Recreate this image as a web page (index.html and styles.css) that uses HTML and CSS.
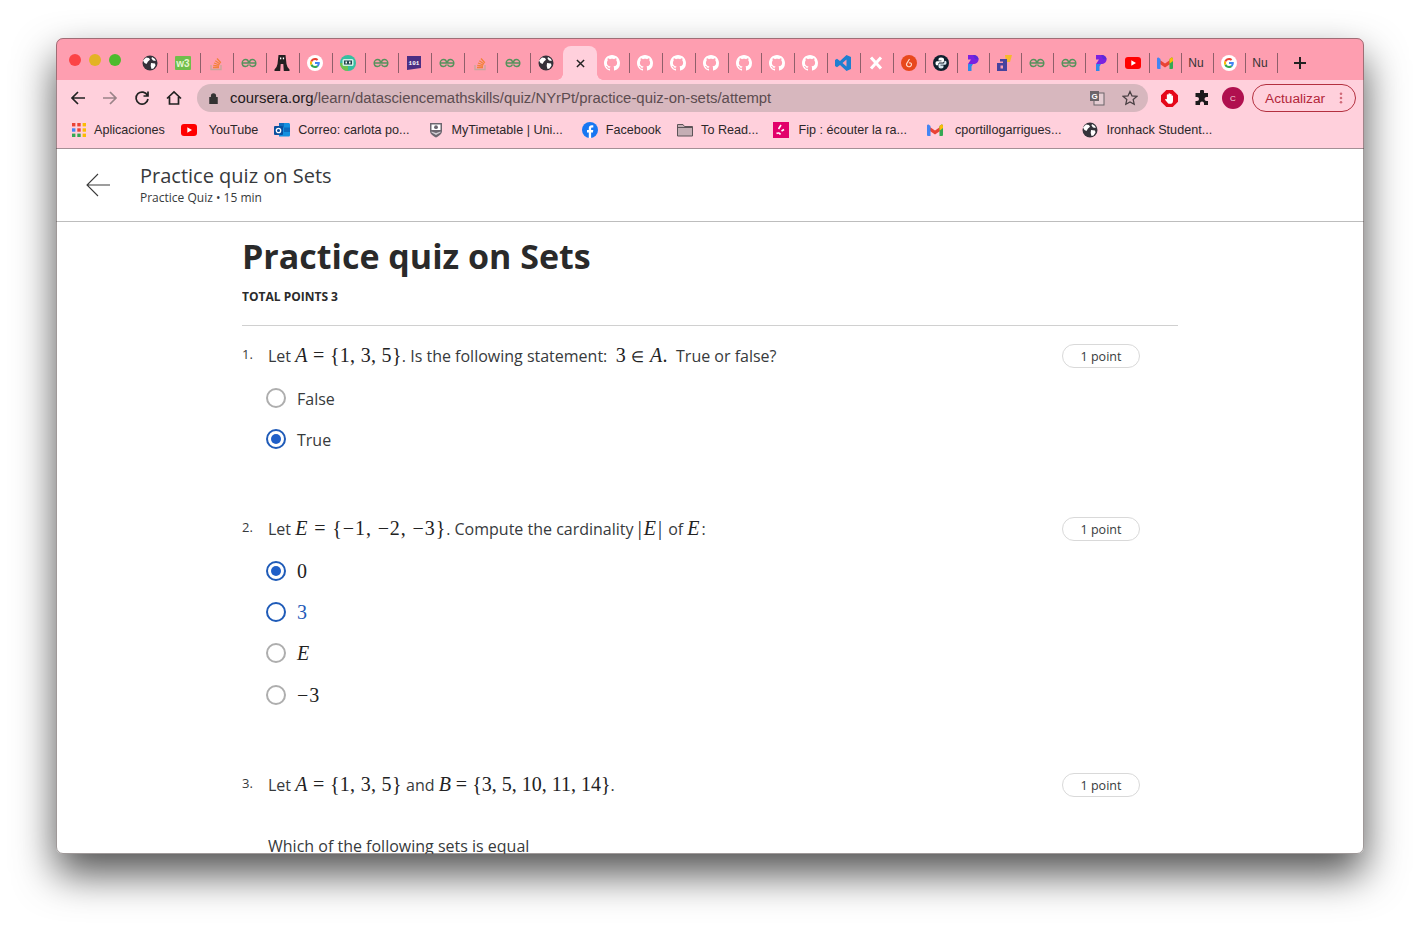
FILE: index.html
```html
<!DOCTYPE html>
<html lang="en">
<head>
    <meta charset="UTF-8">
    <meta name="viewport" content="width=device-width, initial-scale=1.0">
    <title>Practice quiz on Sets</title>
    <link rel="stylesheet" href="styles.css">
</head>
<body>
    <svg class="icon-defs" width="0" height="0">
        <symbol id="globe" viewBox="0 0 16 16">
            <circle cx="8" cy="8" r="7.5" fill="#35323a"/>
            <path d="M4 2.500l3 .5 1 1.800-2 1.700-1.500 2.500-2-1-1.500-2.500zM9 8l4 .5.500 2-2 3-2 .5-.8-3zM10 2l3 2 .8 2-2.800-.5-1.500-2z" fill="#fff"/>
        </symbol>
        <symbol id="w3" viewBox="0 0 16 16">
            <rect y="1" width="16" height="14" rx="1" fill="#6fbe4a"/>
            <text x="8" y="12" font-family="Liberation Sans" font-size="10" font-weight="700" fill="#e6f5d0" text-anchor="middle">w3</text>
        </symbol>
        <symbol id="so" viewBox="0 0 16 16">
            <path d="M3 10v4.500h10V10" fill="none" stroke="#c9a79c" stroke-width="1.400"/>
            <path d="M5 12.500h6M5.300 10.300l5.700.9M6 8l5.400 2M7.300 5.800l4.800 3.200M9 3.500l3.800 4.300" fill="none" stroke="#f2823a" stroke-width="1.300"/>
        </symbol>
        <symbol id="gfg" viewBox="0 0 16 16">
            <path d="M1 8h14M7.500 8c0-2.500-1.500-3.500-3-3.500S1.200 6 1.200 8s1.400 3.500 3.300 3.500c1.400 0 2.500-.8 3-2M8.500 8c0-2.500 1.500-3.500 3-3.500s3.300 1.500 3.300 3.500-1.400 3.500-3.300 3.500c-1.400 0-2.500-.8-3-2" fill="none" stroke="#56925c" stroke-width="1.500"/>
        </symbol>
        <symbol id="boots" viewBox="0 0 16 16">
            <path d="M4.500 0h7l1 9 1 3 2 2.500V16H9.800l-.5-7h-2.600l-.5 7H.5v-1.500l2-2.500 1-3z" fill="#231f20"/>
            <rect x="6" y="2.500" width="1.300" height="1.800" fill="#fff"/>
            <rect x="8.800" y="2.500" width="1.300" height="1.800" fill="#fff"/>
        </symbol>
        <symbol id="google" viewBox="0 0 16 16">
            <circle cx="8" cy="8" r="8" fill="#fff"/>
            <path d="M12.800 8.100c0-.4 0-.7-.1-1H8v1.900h2.700c-.1.600-.5 1.100-1 1.500l1.600 1.200c.9-.9 1.500-2.100 1.500-3.600z" fill="#4285f4"/>
            <path d="M8 13c1.400 0 2.500-.4 3.300-1.300l-1.600-1.200c-.4.300-1 .5-1.700.5-1.300 0-2.400-.9-2.800-2L3.500 10.200C4.300 11.900 6 13 8 13z" fill="#34a853"/>
            <path d="M5.200 9c-.2-.6-.2-1.300 0-2L3.500 5.800c-.7 1.400-.7 3 0 4.400z" fill="#fbbc05"/>
            <path d="M8 5c.7 0 1.400.3 1.900.7l1.400-1.400C10.400 3.500 9.300 3 8 3 6 3 4.300 4.100 3.500 5.800L5.200 7c.4-1.200 1.500-2 2.800-2z" fill="#ea4335"/>
        </symbol>
        <symbol id="robot" viewBox="0 0 16 16">
            <circle cx="8" cy="8" r="8" fill="#35bfa0"/>
            <path d="M0 8a8 8 0 0 0 8 8V8z" fill="#6fc24c"/>
            <rect x="2.500" y="4" width="11" height="7" rx="1.500" fill="#cfeee8"/>
            <rect x="4" y="5.500" width="8" height="4" fill="#23474d"/>
            <rect x="5.500" y="6.500" width="1.500" height="2" fill="#fff"/>
            <rect x="9" y="6.500" width="1.500" height="2" fill="#fff"/>
        </symbol>
        <symbol id="regex" viewBox="0 0 16 16">
            <path d="M1 1h14v12L1 15z" fill="#4b2e83"/>
            <text x="8" y="9.500" font-family="Liberation Mono" font-size="6" font-weight="700" fill="#fff" text-anchor="middle">101</text>
        </symbol>
        <symbol id="github" viewBox="0 0 16 16">
            <path fill="#fff" fill-rule="evenodd" d="M8 0C3.580 0 0 3.580 0 8c0 3.540 2.290 6.530 5.470 7.590.4.070.55-.17.55-.38 0-.19-.01-.82-.01-1.490-2.010.37-2.530-.49-2.690-.94-.09-.23-.48-.94-.82-1.130-.28-.15-.68-.52-.01-.53.63-.01 1.080.58 1.230.82.72 1.210 1.870.87 2.330.66.070-.52.28-.87.51-1.070-1.780-.2-3.640-.89-3.640-3.950 0-.87.31-1.590.82-2.150-.08-.2-.36-1.020.08-2.120 0 0 .67-.21 2.200.82.64-.18 1.320-.27 2-.27.68 0 1.360.09 2 .27 1.530-1.040 2.200-.82 2.200-.82.44 1.100.16 1.920.08 2.120.51.56.82 1.270.82 2.150 0 3.070-1.870 3.750-3.650 3.950.29.25.54.73.54 1.480 0 1.070-.01 1.930-.01 2.200 0 .21.15.46.55.38A8.013 8.013 0 0 0 16 8c0-4.420-3.580-8-8-8z"/>
        </symbol>
        <symbol id="vscode" viewBox="0 0 16 16">
            <path d="M11.500 0L16 2v12l-4.500 2-6.500-6-3 2.300L0 11V5l2-1.300L5 6zM11.500 4.500L7.500 8l4 3.500z" fill="#1f7fd0"/>
        </symbol>
        <symbol id="xmark" viewBox="0 0 16 16">
            <path d="M3 2.500l10 11M13 2.500l-10 11" stroke="#fff" stroke-width="3"/>
        </symbol>
        <symbol id="orange" viewBox="0 0 16 16">
            <circle cx="8" cy="8" r="8" fill="#e8481c"/>
            <path d="M8.500 4L5.500 9a2.500 2.500 0 1 0 5 .5c0-1.500-1.500-2-2.500-1.500" fill="none" stroke="#ffd8c8" stroke-width="1.200"/>
        </symbol>
        <symbol id="python" viewBox="0 0 16 16">
            <circle cx="8" cy="8" r="8" fill="#10202e"/>
            <path d="M8 2.500c-2 0-2.500.8-2.500 2v1h3v.7H4C3 6.200 2.500 7 2.500 8.200s.5 2.100 1.500 2.100h1.300V9c0-.9.700-1.600 1.700-1.600h2.500c.8 0 1.500-.6 1.500-1.500v-1.400c0-1.200-.8-2-3-2z" fill="#fff"/>
            <path d="M8 13.500c2 0 2.500-.8 2.500-2v-1h-3v-.7H12c1 0 1.500-.8 1.500-2s-.5-2.100-1.500-2.100h-.6V7c0 .9-.7 1.600-1.700 1.600H7c-.8 0-1.500.6-1.500 1.500v1.400c0 1.200.8 2 2.500 2z" fill="#d9e6ef"/>
        </symbol>
        <symbol id="pastel" viewBox="0 0 16 16">
            <path d="M3 0h5c3.500 0 5.500 2 5.500 4.500S11.500 9 8 9H3l3-4.500H3z" fill="#7a22e0"/>
            <path d="M3 9h5l-1.500 2.500V16H3z" fill="#2f8ae8"/>
            <path d="M8 0c3.500 0 5.500 2 5.500 4.500L10 4z" fill="#5a2bd8"/>
        </symbol>
        <symbol id="books" viewBox="0 0 16 16">
            <path d="M8 0h7l-2 7H9z" fill="#f7b92b"/>
            <path d="M3 4h7v12H0V8h6V6.500H3zM3.500 10.500v3H6v-3z" fill="#45439e"/>
        </symbol>
        <symbol id="youtube" viewBox="0 0 16 16">
            <rect y="2" width="16" height="12" rx="3" fill="#f00"/>
            <path d="M6.300 5.300L11 8l-4.700 2.700z" fill="#fff"/>
        </symbol>
        <symbol id="gmail" viewBox="0 0 16 16">
            <path d="M0 3l8 5.500L16 3v4l-8 5.500L0 7z" fill="#ea4335"/>
            <path d="M0 4.200C0 2.800 1 2.300 1.900 2.800L3.500 4v10H1a1 1 0 0 1-1-1z" fill="#4285f4"/>
            <path d="M16 4.200c0-1.400-1-1.900-1.900-1.400L12.500 4v10H15a1 1 0 0 0 1-1z" fill="#34a853"/>
            <path d="M12.500 4l1.600-1.200c.9-.5 1.900 0 1.900 1.400V6l-3.500 2.700z" fill="#fbbc05"/>
        </symbol>
        <symbol id="apps" viewBox="0 0 14 14">
            <rect width="3.400" height="3.400" fill="#ea4335"/><rect x="5.300" width="3.400" height="3.400" fill="#ea4335"/><rect x="10.600" width="3.400" height="3.400" fill="#fbbc05"/>
            <rect y="5.300" width="3.400" height="3.400" fill="#4285f4"/><rect x="5.300" y="5.300" width="3.400" height="3.400" fill="#ea4335"/><rect x="10.600" y="5.300" width="3.400" height="3.400" fill="#fbbc05"/>
            <rect y="10.600" width="3.400" height="3.400" fill="#34a853"/><rect x="5.300" y="10.600" width="3.400" height="3.400" fill="#34a853"/><rect x="10.600" y="10.600" width="3.400" height="3.400" fill="#fbbc05"/>
        </symbol>
        <symbol id="outlook" viewBox="0 0 16 16">
            <path d="M5 1h9.500c.8 0 1.500.7 1.500 1.500V13c0 1-.7 1.500-1.500 1.500H5z" fill="#1490df"/>
            <path d="M5 1h5v4.500H5zM10 5.500h6V10h-6z" fill="#0f6cbd"/>
            <rect y="4" width="9" height="9" rx="1" fill="#0a4f9e"/>
            <circle cx="4.500" cy="8.500" r="2.200" fill="none" stroke="#fff" stroke-width="1.300"/>
        </symbol>
        <symbol id="shield" viewBox="0 0 16 16">
            <path d="M2 1h12v8c0 3-3 5-6 6.500C5 14 2 12 2 9z" fill="#6c666f"/>
            <path d="M3.500 2.500h9v5.500h-9z" fill="#fff"/>
            <circle cx="8" cy="5.200" r="1.900" fill="#6c666f"/>
            <path d="M3.500 9.500l4.500 1.500 4.500-1.500v1L8 13l-4.500-2.500z" fill="#d0ccd2"/>
        </symbol>
        <symbol id="facebook" viewBox="0 0 16 16">
            <circle cx="8" cy="8" r="8" fill="#1877f2"/>
            <path d="M6.800 16v-5.500H5V8h1.800V6.300c0-2 1.200-3 3-3 .8 0 1.500.1 1.500.1v2h-1c-1 0-1.200.5-1.200 1.200V8h2.200l-.4 2.500H9.100V16z" fill="#fff"/>
        </symbol>
        <symbol id="folder" viewBox="0 0 16 16">
            <path d="M.5 2.500h5.500l1.500 2h8v9.500H.500z" fill="#c4aeb4" stroke="#5c5458"/>
            <path d="M.5 5.500h15" stroke="#5c5458"/>
        </symbol>
        <symbol id="fip" viewBox="0 0 16 16">
            <rect width="16" height="16" fill="#e2006a"/>
            <path d="M8 3L5.500 7M11 7.500L8.500 9M3.500 11.500c1.500-1 3-.5 4 1" fill="none" stroke="#fff" stroke-width="1.600"/>
        </symbol>
    </svg>

    <div class="window">
        <div class="tabstrip">
            <div class="lights">
                <span class="light light-red"></span>
                <span class="light light-yellow"></span>
                <span class="light light-green"></span>
            </div>
            <div class="tabs">
                <div class="tab"><svg class="fav"><use href="#globe"/></svg></div>
                <div class="tab"><svg class="fav"><use href="#w3"/></svg></div>
                <div class="tab"><svg class="fav"><use href="#so"/></svg></div>
                <div class="tab"><svg class="fav"><use href="#gfg"/></svg></div>
                <div class="tab"><svg class="fav"><use href="#boots"/></svg></div>
                <div class="tab"><svg class="fav"><use href="#google"/></svg></div>
                <div class="tab"><svg class="fav"><use href="#robot"/></svg></div>
                <div class="tab"><svg class="fav"><use href="#gfg"/></svg></div>
                <div class="tab"><svg class="fav"><use href="#regex"/></svg></div>
                <div class="tab"><svg class="fav"><use href="#gfg"/></svg></div>
                <div class="tab"><svg class="fav"><use href="#so"/></svg></div>
                <div class="tab"><svg class="fav"><use href="#gfg"/></svg></div>
                <div class="tab tab-before-active"><svg class="fav"><use href="#globe"/></svg></div>
                <div class="tab-active">
                    <svg class="close-x" viewBox="0 0 10 10"><path d="M1 1l8 8M9 1l-8 8"/></svg>
                </div>
                <div class="tab"><svg class="fav"><use href="#github"/></svg></div>
                <div class="tab"><svg class="fav"><use href="#github"/></svg></div>
                <div class="tab"><svg class="fav"><use href="#github"/></svg></div>
                <div class="tab"><svg class="fav"><use href="#github"/></svg></div>
                <div class="tab"><svg class="fav"><use href="#github"/></svg></div>
                <div class="tab"><svg class="fav"><use href="#github"/></svg></div>
                <div class="tab"><svg class="fav"><use href="#github"/></svg></div>
                <div class="tab"><svg class="fav"><use href="#vscode"/></svg></div>
                <div class="tab"><svg class="fav"><use href="#xmark"/></svg></div>
                <div class="tab tab-small"><svg class="fav"><use href="#orange"/></svg></div>
                <div class="tab tab-small"><svg class="fav"><use href="#python"/></svg></div>
                <div class="tab tab-small"><svg class="fav"><use href="#pastel"/></svg></div>
                <div class="tab tab-small"><svg class="fav"><use href="#books"/></svg></div>
                <div class="tab tab-small"><svg class="fav"><use href="#gfg"/></svg></div>
                <div class="tab tab-small"><svg class="fav"><use href="#gfg"/></svg></div>
                <div class="tab tab-small"><svg class="fav"><use href="#pastel"/></svg></div>
                <div class="tab tab-small"><svg class="fav"><use href="#youtube"/></svg></div>
                <div class="tab tab-small"><svg class="fav"><use href="#gmail"/></svg></div>
                <div class="tab tab-small"><span class="tab-text">Nu</span></div>
                <div class="tab tab-small"><svg class="fav"><use href="#google"/></svg></div>
                <div class="tab tab-small"><span class="tab-text">Nu</span></div>
            </div>
            <svg class="new-tab" viewBox="0 0 12 12"><path d="M6 0v12M0 6h12"/></svg>
        </div>

        <div class="toolbar">
            <svg class="tool" viewBox="0 0 16 16"><path d="M15 8H2M8 2L2 8l6 6"/></svg>
            <svg class="tool tool-off" viewBox="0 0 16 16"><path d="M1 8h13M8 2l6 6-6 6"/></svg>
            <svg class="tool" viewBox="0 0 16 16"><path d="M13.500 5.500A6 6 0 1 0 14 9M14 1.500v4.500H9.500"/></svg>
            <svg class="tool" viewBox="0 0 16 16"><path d="M1 8.500L8 2l7 6.500M3.500 7v7h9V7"/></svg>
            <div class="omnibox">
                <svg class="lock" viewBox="0 0 10 12"><path d="M1 5h8v7H1zM2.800 5V3.200a2.200 2.200 0 0 1 4.400 0V5" /></svg>
                <span class="url"><span class="url-host">coursera.org</span>/learn/datasciencemathskills/quiz/NYrPt/practice-quiz-on-sets/attempt</span>
                <svg class="translate" viewBox="0 0 16 16">
                    <rect x="5" y="3" width="10" height="12" fill="#e4ccd2" stroke="#6b6468"/>
                    <rect x="1" y="1" width="9" height="10" fill="#6b6468"/>
                    <text x="5.500" y="9" font-family="Liberation Sans" font-size="8" font-weight="700" fill="#fff" text-anchor="middle">G</text>
                </svg>
                <svg class="star" viewBox="0 0 16 16"><path d="M8 1.500l2 4.400 4.800.5-3.600 3.200 1 4.700L8 12l-4.200 2.300 1-4.700L1.200 6.400 6 5.900z"/></svg>
            </div>
            <svg class="ext ext-block" viewBox="0 0 16 16">
                <path d="M5 0h6l5 5v6l-5 5H5l-5-5V5z" fill="#e5081a"/>
                <path d="M5.500 9V4.500a.8.800 0 0 1 1.500 0V3.500a.8.800 0 0 1 1.500 0v.5a.8.800 0 0 1 1.500 0v1.500a.7.700 0 0 1 1.300 0V10c0 2-1.200 3-3 3-1.300 0-2-.5-2.700-1.700L4 9.500c-.4-.8.700-1.400 1.500-.5z" fill="#fff"/>
            </svg>
            <svg class="ext" viewBox="0 0 16 16">
                <path d="M6 1.500a2 2 0 0 1 4 0V3h4v4h-1.500a2 2 0 0 0 0 4H14v4H10v-1.500a2 2 0 0 0-4 0V15H1.500v-4H3a2 2 0 0 0 0-4H1.500V3H6z" fill="#1c1a1c"/>
            </svg>
            <span class="avatar">C</span>
            <div class="update">
                <span>Actualizar</span>
                <svg class="update-dots" viewBox="0 0 4 14"><circle cx="2" cy="2" r="1.500"/><circle cx="2" cy="7" r="1.500"/><circle cx="2" cy="12" r="1.500"/></svg>
            </div>
        </div>

        <div class="bookmarks">
            <div class="bookmark"><svg class="bm-icon bm-apps"><use href="#apps"/></svg>Aplicaciones</div>
            <div class="bookmark"><svg class="bm-icon bm-wide"><use href="#youtube"/></svg>YouTube</div>
            <div class="bookmark"><svg class="bm-icon"><use href="#outlook"/></svg>Correo: carlota po...</div>
            <div class="bookmark bm-shield"><svg class="bm-icon"><use href="#shield"/></svg>MyTimetable | Uni...</div>
            <div class="bookmark bm-facebook"><svg class="bm-icon"><use href="#facebook"/></svg>Facebook</div>
            <div class="bookmark"><svg class="bm-icon"><use href="#folder"/></svg>To Read...</div>
            <div class="bookmark bm-fip"><svg class="bm-icon"><use href="#fip"/></svg>Fip : écouter la ra...</div>
            <div class="bookmark bm-gmail"><svg class="bm-icon bm-wide"><use href="#gmail"/></svg>cportillogarrigues...</div>
            <div class="bookmark bm-ironhack"><svg class="bm-icon"><use href="#globe"/></svg>Ironhack Student...</div>
        </div>

        <header class="page-header">
            <svg class="back-arrow" viewBox="0 0 24 24"><path d="M24 12H1M12 1L1 12l11 11"/></svg>
            <div>
                <div class="page-title">Practice quiz on Sets</div>
                <div class="page-sub">Practice Quiz • 15 min</div>
            </div>
        </header>

        <main class="quiz">
            <h1 class="quiz-title">Practice quiz on Sets</h1>
            <div class="total-points">TOTAL POINTS 3</div>
            <hr class="divider">

            <section class="question">
                <div class="question-head">
                    <span class="question-num">1.</span>
                    <p class="question-text">Let <span class="math"><i>A</i> = {1, 3, 5}</span>. Is the following statement: &nbsp;<span class="math">3 <span class="math-in">∈</span> <i>A</i>.</span>&nbsp; True or false?</p>
                    <span class="point-pill">1 point</span>
                </div>
                <div class="option"><span class="radio"></span>False</div>
                <div class="option"><span class="radio radio-checked"></span>True</div>
            </section>

            <section class="question">
                <div class="question-head">
                    <span class="question-num">2.</span>
                    <p class="question-text">Let <span class="math math-wide"><i>E</i> = {−1, −2, −3}</span>. Compute the cardinality <span class="math math-bars">|<i>E</i>|</span> of <span class="math math-bars"><i>E</i></span>:</p>
                    <span class="point-pill">1 point</span>
                </div>
                <div class="option"><span class="radio radio-checked"></span><span class="math">0</span></div>
                <div class="option option-focus"><span class="radio radio-focus"></span><span class="math">3</span></div>
                <div class="option"><span class="radio"></span><span class="math"><i>E</i></span></div>
                <div class="option option-last"><span class="radio"></span><span class="math math-wide">−3</span></div>
            </section>

            <section class="question">
                <div class="question-head">
                    <span class="question-num">3.</span>
                    <p class="question-text">Let <span class="math"><i>A</i> = {1, 3, 5}</span> and <span class="math math-tight"><i>B</i> = {3, 5, 10, 11, 14}</span>.</p>
                    <span class="point-pill">1 point</span>
                </div>
                <p class="question-more">Which of the following sets is equal</p>
            </section>
        </main>
    </div>
</body>
</html>
```

FILE: styles.css
```css
html, body {
    margin: 0;
    height: 928px;
    overflow: hidden;
    background-color: #fff;
}

body {
    font-family: "Open Sans", sans-serif;
    color: #2b2b2b;
}

.icon-defs {
    display: none;
}

.window {
    box-sizing: border-box;
    width: 1308px;
    height: 816px;
    margin: 38px 56px 0;
    display: flex;
    flex-direction: column;
    overflow: hidden;
    border-radius: 7px;
    outline: 1px solid rgba(80, 70, 70, 0.55);
    outline-offset: -1px;
    background-color: #fff;
    box-shadow: 0 20px 40px rgba(0, 0, 0, 0.68);
}

/* tab strip */
.tabstrip {
    flex: none;
    height: 42px;
    display: flex;
    background-color: #fe9eb0;
}

.lights {
    display: flex;
    gap: 8px;
    width: 77px;
    padding: 16px 0 0 13px;
    box-sizing: border-box;
}

.light {
    width: 12px;
    height: 12px;
    border-radius: 50%;
}

.light-red { background-color: #fc4446; }
.light-yellow { background-color: #e3b325; }
.light-green { background-color: #4dbb2c; }

.tabs {
    display: flex;
    align-items: flex-end;
}

.tab {
    position: relative;
    box-sizing: border-box;
    width: 33px;
    height: 34px;
    display: flex;
    align-items: center;
    justify-content: center;
}

.tab::after {
    content: "";
    position: absolute;
    right: -2px;
    top: 7px;
    width: 1px;
    height: 20px;
    background-color: #8f5f6a;
}

.tab-small {
    width: 32px;
    padding-left: 2px;
}

.tab-before-active::after {
    display: none;
}

.fav {
    width: 16px;
    height: 16px;
}

.tab-text {
    font-family: "Liberation Sans", sans-serif;
    font-size: 12px;
    color: #333;
    margin-right: 2px;
}

.tab-active {
    position: relative;
    z-index: 1;
    width: 34px;
    height: 34px;
    margin: 0 -2px 0 1px;
    display: flex;
    align-items: center;
    justify-content: center;
    background-color: #ffd0dc;
    border-radius: 8px 8px 0 0;
}

/* flared feet of the active tab */
.tab-active::before,
.tab-active::after {
    content: "";
    position: absolute;
    bottom: 0;
    width: 6px;
    height: 6px;
}

.tab-active::before {
    left: -6px;
    background: radial-gradient(circle at 0 0, transparent 5.5px, #ffd0dc 6px);
}

.tab-active::after {
    right: -6px;
    background: radial-gradient(circle at 100% 0, transparent 5.5px, #ffd0dc 6px);
}

.close-x {
    width: 9px;
    height: 9px;
    stroke: #222;
    stroke-width: 1.6;
    fill: none;
}

.new-tab {
    width: 12px;
    height: 12px;
    margin: 19px 0 0 18px;
    stroke: #222;
    stroke-width: 2;
    fill: none;
}

/* toolbar */
.toolbar {
    flex: none;
    height: 36px;
    display: flex;
    align-items: center;
    padding-left: 14px;
    background-color: #ffd0dc;
}

.tool {
    flex: none;
    width: 16px;
    height: 16px;
    margin-right: 16px;
    stroke: #222;
    stroke-width: 1.7;
    fill: none;
}

.tool-off {
    stroke: #9a8388;
}

.omnibox {
    flex: none;
    box-sizing: border-box;
    width: 951px;
    height: 28px;
    margin-left: -1px;
    padding: 0 10px 0 12px;
    display: flex;
    align-items: center;
    border-radius: 14px;
    background-color: #d7b7be;
}

.lock {
    flex: none;
    width: 9px;
    height: 11px;
    margin-right: 12px;
    stroke: #333;
    stroke-width: 1.4;
    fill: none;
}

.lock path {
    fill: #333;
}

.url {
    flex: 1;
    font-family: "Liberation Sans", sans-serif;
    font-size: 14.9px;
    color: #5c4c50;
    white-space: nowrap;
}

.url-host {
    color: #1f1a1c;
}

.translate {
    width: 16px;
    height: 16px;
    margin-right: 17px;
}

.star {
    width: 16px;
    height: 16px;
    stroke: #4a4044;
    stroke-width: 1.3;
    fill: none;
}

.ext {
    flex: none;
    width: 16px;
    height: 16px;
    margin-left: 16px;
}

.ext-block {
    width: 17px;
    height: 17px;
    margin-left: 13px;
}

.avatar {
    flex: none;
    width: 22px;
    height: 22px;
    margin-left: 12px;
    border-radius: 50%;
    display: flex;
    align-items: center;
    justify-content: center;
    font-family: "Liberation Sans", sans-serif;
    font-size: 8px;
    color: #f6d6de;
    background-color: #b0104f;
}

.update {
    flex: none;
    box-sizing: border-box;
    width: 104px;
    height: 28px;
    margin-left: 8px;
    padding: 0 12px;
    display: flex;
    align-items: center;
    justify-content: space-between;
    border: 1px solid #b3303f;
    border-radius: 14px;
    font-family: "Liberation Sans", sans-serif;
    font-size: 13.7px;
    color: #b3263a;
}

.update-dots {
    width: 4px;
    height: 12px;
    fill: #d06a78;
}

/* bookmarks */
.bookmarks {
    flex: none;
    height: 33px;
    display: flex;
    align-items: center;
    gap: 16px;
    padding: 0 0 4px 16px;
    box-sizing: border-box;
    background-color: #ffd0dc;
    border-bottom: 1px solid #a48f95;
    font-family: "Liberation Sans", sans-serif;
    font-size: 12.6px;
    color: #2c2729;
}

.bookmark {
    display: flex;
    align-items: center;
    gap: 8px;
    white-space: nowrap;
}

.bm-icon {
    flex: none;
    width: 16px;
    height: 16px;
}

.bm-apps {
    width: 14px;
    height: 14px;
}

.bm-wide {
    margin-right: 4px;
}

.bm-shield { margin-left: 2px; }
.bm-facebook { margin-left: 3px; }
.bm-fip { margin-left: -2px; gap: 10px; }
.bm-gmail { margin-left: 4px; }
.bm-ironhack { margin-left: 5px; }

/* coursera header */
.page-header {
    flex: none;
    box-sizing: border-box;
    height: 73px;
    display: flex;
    align-items: center;
    gap: 30px;
    padding: 0 0 1px 30px;
    border-bottom: 1px solid #bdbdbd;
}

.back-arrow {
    width: 24px;
    height: 24px;
    stroke: #3c3c3c;
    stroke-width: 1.1;
    fill: none;
}

.page-title {
    font-size: 20px;
    line-height: 26px;
    color: #373a3c;
}

.page-sub {
    font-size: 12px;
    line-height: 18px;
    color: #373a3c;
}

/* quiz body */
.quiz {
    flex: 1;
    min-height: 0;
    overflow: hidden;
    width: 936px;
    margin-left: 186px;
}

.quiz-title {
    margin: 10px 0 0;
    font-size: 34px;
    line-height: 48px;
    font-weight: 700;
    color: #2a2a2a;
}

.total-points {
    margin-top: 8px;
    font-size: 12px;
    line-height: 18px;
    font-weight: 700;
}

.divider {
    margin: 19px 0 0;
    border: none;
    border-top: 1px solid #d0d0d0;
}

.question {
    padding-top: 18px;
    padding-bottom: 40px;
}

.question-head {
    display: flex;
    align-items: center;
    width: 898px;
    height: 24px;
    margin-bottom: 9px;
}

.question-num {
    flex: none;
    width: 26px;
    margin-top: -4px;
    font-size: 13px;
    color: #373a3c;
}

.question-text {
    flex: 1;
    margin: 0 0 2px;
    font-size: 16px;
    color: #373a3c;
    white-space: nowrap;
}

.math {
    font-family: "Liberation Serif", serif;
    font-size: 20px;
    letter-spacing: 0.3px;
    color: #222;
}

.math-wide {
    letter-spacing: 0.9px;
}

.math-bars {
    letter-spacing: 2px;
}

.math-tight {
    letter-spacing: 0;
}

.math-in {
    font-size: 15px;
}

.point-pill {
    flex: none;
    box-sizing: border-box;
    width: 78px;
    height: 24px;
    display: flex;
    align-items: center;
    justify-content: center;
    border: 1px solid #d9d9d9;
    border-radius: 12px;
    font-size: 12.5px;
    color: #373a3c;
}

.option {
    box-sizing: border-box;
    display: flex;
    align-items: center;
    gap: 11px;
    height: 41px;
    padding: 2px 0 0 24px;
    font-size: 16px;
    color: #373a3c;
}

.option-last {
    margin-top: 1px;
}

.radio {
    flex: none;
    box-sizing: border-box;
    width: 20px;
    height: 20px;
    margin-top: -2px;
    display: flex;
    align-items: center;
    justify-content: center;
    border: 2px solid #aeaeae;
    border-radius: 50%;
}

.radio-checked,
.radio-focus {
    border-color: #1f5bb8;
}

.radio-checked::after {
    content: "";
    width: 10px;
    height: 10px;
    border-radius: 50%;
    background-color: #1f5fc8;
}

.option-focus .math {
    color: #1f5bb8;
}

.question-more {
    margin: 38px 0 0 26px;
    font-size: 16px;
    color: #373a3c;
}
```
